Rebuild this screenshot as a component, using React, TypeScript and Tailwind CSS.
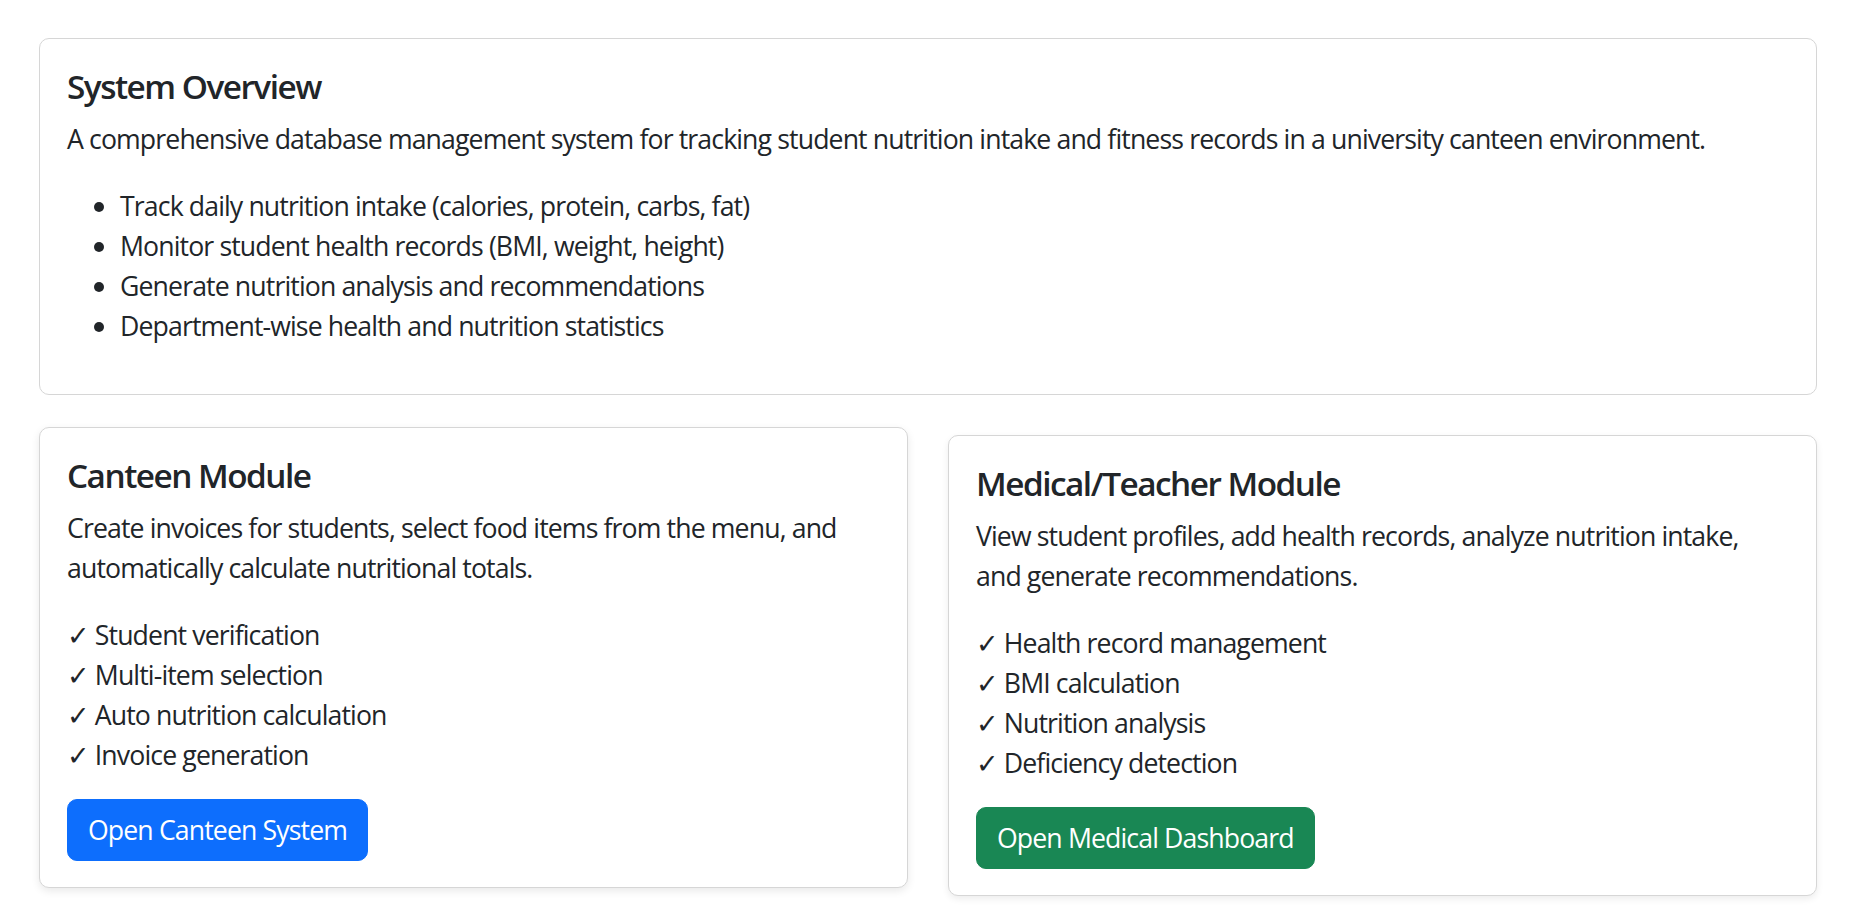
import React from 'react';

const overviewPoints = [
  'Track daily nutrition intake (calories, protein, carbs, fat)',
  'Monitor student health records (BMI, weight, height)',
  'Generate nutrition analysis and recommendations',
  'Department-wise health and nutrition statistics',
];

interface ModuleCardProps {
  title: string;
  description: string;
  features: string[];
  action: string;
  buttonClass: string;
  lifted?: boolean;
}

const ModuleCard: React.FC<ModuleCardProps> = ({ title, description, features, action, buttonClass, lifted }) => (
  <div
    className={
      lifted
        ? 'rounded-[10px] border border-[#d6d6d6] bg-white px-[27px] pt-[27px] pb-[26px] shadow-[0_3px_8px_rgba(0,0,0,0.09)] -translate-y-[8px]'
        : 'rounded-[10px] border border-[#d6d6d6] bg-white px-[27px] pt-[27px] pb-[26px] shadow-[0_3px_7px_rgba(0,0,0,0.075)]'
    }
  >
    <h5 className="mb-[13px] text-[33.33px] font-semibold leading-[40px] tracking-[-0.045em]">{title}</h5>
    <p className="mb-[27px]">{description}</p>
    <ul className="mb-[24px]">
      {features.map((f) => (
        <li key={f}>
          <span className="font-['DejaVu_Sans'] text-[27px] leading-none">✓</span> {f}
        </li>
      ))}
    </ul>
    <button
      className={`inline-block rounded-[10px] border px-[20px] py-[10px] text-white leading-[40px] ${buttonClass}`}
    >
      {action}
    </button>
  </div>
);

export default function App() {
  return (
    <div className="min-h-screen bg-white pl-[39px] pr-[51px] pt-[38px] font-['Open_Sans',sans-serif] text-[26.67px] leading-[40px] tracking-[-0.033em] text-[#212529]">
      {/* System overview */}
      <div className="rounded-[10px] border border-[#d6d6d6] bg-white px-[27px] pt-[27px] pb-[21px]">
        <h5 className="mb-[13px] text-[33.33px] font-semibold leading-[40px] tracking-[-0.045em]">System Overview</h5>
        <p className="mb-[27px]">
          A comprehensive database management system for tracking student nutrition intake and fitness records in a
          university canteen environment.
        </p>
        <ul className="mb-[27px] list-disc pl-[53px]">
          {overviewPoints.map((p) => (
            <li key={p}>{p}</li>
          ))}
        </ul>
      </div>

      {/* Modules */}
      <div className="mt-[40px] grid grid-cols-2 items-start gap-x-[40px]">
        <ModuleCard
          lifted
          title="Canteen Module"
          description="Create invoices for students, select food items from the menu, and automatically calculate nutritional totals."
          features={['Student verification', 'Multi-item selection', 'Auto nutrition calculation', 'Invoice generation']}
          action="Open Canteen System"
          buttonClass="bg-[#0d6efd] border-[#0d6efd]"
        />
        <ModuleCard
          title="Medical/Teacher Module"
          description="View student profiles, add health records, analyze nutrition intake, and generate recommendations."
          features={['Health record management', 'BMI calculation', 'Nutrition analysis', 'Deficiency detection']}
          action="Open Medical Dashboard"
          buttonClass="bg-[#198754] border-[#198754]"
        />
      </div>
    </div>
  );
}
